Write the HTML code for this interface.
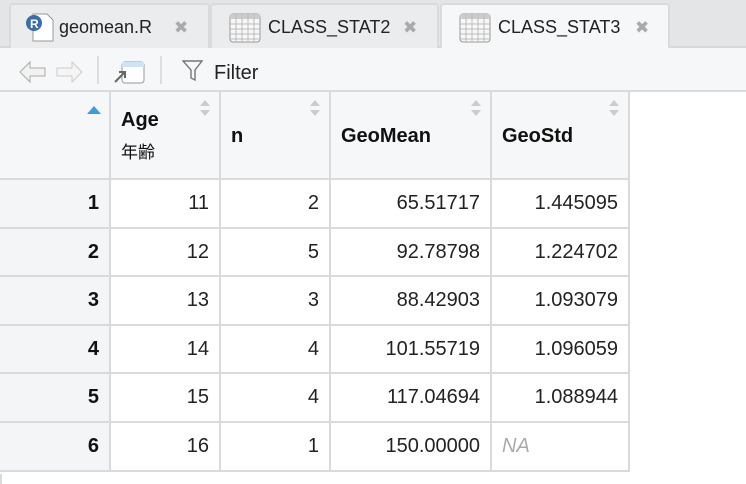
<!DOCTYPE html>
<html><head><meta charset="utf-8"><style>
*{margin:0;padding:0;box-sizing:border-box}
body{width:746px;height:483px;overflow:hidden;background:#fff;font-family:"Liberation Sans","Noto Sans CJK JP",sans-serif;position:relative}
.abs{position:absolute}
.tabbar{left:0;top:0;width:746px;height:48px;background:#e4e5e6;border-bottom:2px solid #d6d8da}
.tab{top:3px;height:45px;background:#ebeced;border:2px solid #d8dadc;border-bottom:none;border-radius:4px 4px 0 0;font-size:18px;color:#222}
.tab.act{background:#f5f7f8;height:47px}
.tab span{position:absolute;top:12px}
.x{color:#aaa;font-size:17px}
.tool{left:0;top:48px;width:746px;height:44px;background:#f5f7f8;border-bottom:2px solid #d8dadc}
.cell{position:absolute;border-right:2px solid #d8dadc;border-bottom:2px solid #d8dadc;font-size:20px;color:#222;text-align:right;padding-right:10px;line-height:46px}
.hd{background:#f5f7f8;font-weight:bold;color:#111;text-align:left;padding-left:10px;font-size:19px}
.rn{background:#f3f5f6;font-weight:bold;color:#111}
.sort{position:absolute;right:9px;top:8px;width:10px}
</style></head><body>
<div class="abs tabbar"></div>
<div class="abs tab" style="left:9px;width:201px">
 <svg class="abs" style="left:12px;top:6px" width="32" height="32"><path d="M10 3h14l6 6v21H10z" fill="#fff" stroke="#999"/><circle cx="11" cy="12" r="8" fill="#3a6ea5"/><text x="7" y="17" font-size="12" font-weight="bold" fill="#fff" font-family="Liberation Sans">R</text></svg>
 <span style="left:48px">geomean.R</span><span class="x" style="left:163px;top:13px">✖</span></div>
<div class="abs tab" style="left:210px;width:229px">
 <svg class="abs" style="left:17px;top:8px" width="32" height="30"><rect x="1" y="1" width="30" height="28" rx="3" fill="#f8f8f8" stroke="#999"/><rect x="1" y="1" width="30" height="5" fill="#ccc"/><path d="M7 1v28M13 1v28M19 1v28M25 1v28M1 11h30M1 16h30M1 21h30M1 26h30" stroke="#bbb"/></svg>
 <span style="left:56px">CLASS_STAT2</span><span class="x" style="left:191px;top:13px">✖</span></div>
<div class="abs tab act" style="left:440px;width:230px">
 <svg class="abs" style="left:17px;top:8px" width="32" height="30"><rect x="1" y="1" width="30" height="28" rx="3" fill="#f8f8f8" stroke="#999"/><rect x="1" y="1" width="30" height="5" fill="#ccc"/><path d="M7 1v28M13 1v28M19 1v28M25 1v28M1 11h30M1 16h30M1 21h30M1 26h30" stroke="#bbb"/></svg>
 <span style="left:56px">CLASS_STAT3</span><span class="x" style="left:193px;top:13px">✖</span></div>
<div class="abs tool">
 <svg class="abs" style="left:18px;top:12px" width="66" height="24"><path d="M2 12l10-10v6h15v8H12v6z" fill="#f2f2f2" stroke="#aaa"/><path d="M64 12l-10-10v6H39v8h15v6z" fill="#f5f5f5" stroke="#ccc"/></svg>
 <div class="abs" style="left:97px;top:8px;width:2px;height:28px;background:#ddd"></div>
 <svg class="abs" style="left:112px;top:11px" width="34" height="26"><rect x="10" y="3" width="22" height="21" rx="3" fill="#fff" stroke="#999"/><rect x="10" y="3" width="22" height="5" fill="#cfe3f7"/><path d="M3 23l9-9M7 13h6v6" stroke="#666" stroke-width="2" fill="none"/></svg>
 <div class="abs" style="left:160px;top:8px;width:2px;height:28px;background:#ddd"></div>
 <svg class="abs" style="left:182px;top:12px" width="22" height="22"><path d="M1 1h19l-7 9v10l-4-2v-8z" fill="none" stroke="#777" stroke-width="1.4"/></svg>
 <span class="abs" style="left:214px;top:14px;font-size:20px;color:#222">Filter</span>
</div>
<div class="cell hd" style="left:0;top:92px;width:111px;height:88px"><svg class="abs" style="left:87px;top:14px" width="14" height="8"><path d="M0 8L7 0l7 8z" fill="#3a9be0"/></svg></div>
<div class="cell hd" style="left:111px;top:92px;width:110px;height:88px;line-height:32px;padding-top:12px;font-size:20px">Age<br><span style="font-weight:normal;font-size:17px">年齢</span><svg class="sort" width="10" height="16"><path d="M0 6l5-6 5 6zM0 10l5 6 5-6z" fill="#ccc"/></svg></div>
<div class="cell hd" style="left:221px;top:92px;width:110px;height:88px;line-height:88px;font-size:20px">n<svg class="sort" width="10" height="16"><path d="M0 6l5-6 5 6zM0 10l5 6 5-6z" fill="#ccc"/></svg></div>
<div class="cell hd" style="left:331px;top:92px;width:161px;height:88px;line-height:88px;font-size:20px">GeoMean<svg class="sort" width="10" height="16"><path d="M0 6l5-6 5 6zM0 10l5 6 5-6z" fill="#ccc"/></svg></div>
<div class="cell hd" style="left:492px;top:92px;width:138px;height:88px;line-height:88px;font-size:20px">GeoStd<svg class="sort" width="10" height="16"><path d="M0 6l5-6 5 6zM0 10l5 6 5-6z" fill="#ccc"/></svg></div>
<div id="rows"></div>
<div class="abs" style="left:0;top:474px;width:2px;height:10px;background:#d8dadc"></div>
<script>
var d=[[1,11,2,"65.51717","1.445095"],[2,12,5,"92.78798","1.224702"],[3,13,3,"88.42903","1.093079"],[4,14,4,"101.55719","1.096059"],[5,15,4,"117.04694","1.088944"],[6,16,1,"150.00000",null]];
var L=[0,111,221,331,492],W=[111,110,110,161,138],h="";
d.forEach(function(r,i){var t=180+i*48.6;
for(var c=0;c<5;c++){var v=r[c];var cls="cell"+(c==0?" rn":"");var st="";
if(v===null){v="NA";st="text-align:left;padding-left:10px;color:#aaa;font-style:italic;"}
h+='<div class="'+cls+'" style="'+st+'left:'+L[c]+'px;top:'+t+'px;width:'+W[c]+'px;height:48.6px">'+v+'</div>';}});
document.getElementById("rows").innerHTML=h;
</script>
</body></html>
